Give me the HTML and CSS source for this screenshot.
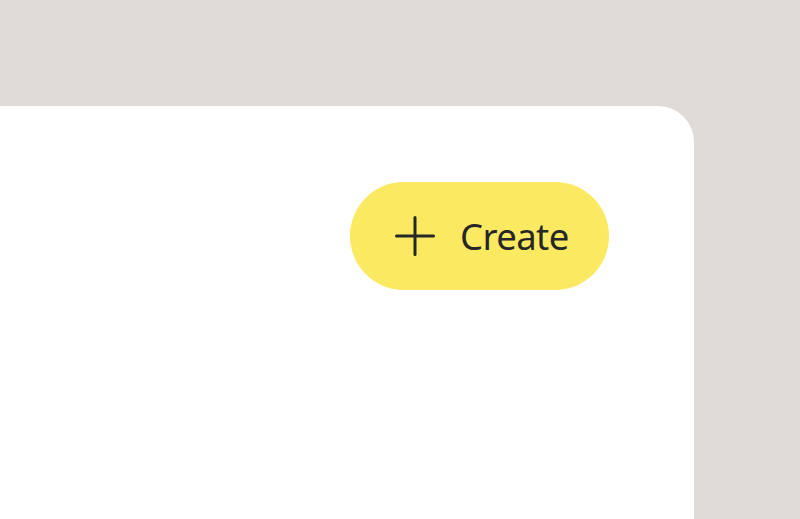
FILE: index.html
```html
<!DOCTYPE html>
<html>
<head>
<meta charset="utf-8">
<link rel="stylesheet" href="styles.css">
</head>
<body>
<div class="page">
  <main class="card">
    <div class="toolbar">
      <button class="create-btn">
        <svg class="plus" width="40" height="40" viewBox="0 0 40 40" aria-hidden="true">
          <path d="M20 1.5V38.5M1.5 20H38.5" stroke="#262626" stroke-width="3" stroke-linecap="round" fill="none"/>
        </svg>
        <span class="label">Create</span>
      </button>
    </div>
  </main>
</div>
</body>
</html>
```
FILE: styles.css
```css
html, body {
  margin: 0;
  padding: 0;
  height: 100%;
  overflow: hidden;
}
body {
  background: #e0dbd6;
  font-family: "Noto Sans", "Open Sans", sans-serif;
}
.page {
  padding-top: 106px;
  height: 100%;
  box-sizing: border-box;
}
.card {
  width: 694px;
  height: 100%;
  background: #ffffff;
  border-top-right-radius: 36px;
  box-sizing: border-box;
  padding: 76px 85px 0 0;
}
.toolbar {
  display: flex;
  justify-content: flex-end;
}
.create-btn {
  display: inline-flex;
  align-items: center;
  gap: 25px;
  width: 259px;
  height: 108px;
  padding: 0 0 0 45px;
  border: none;
  border-radius: 54px;
  background: #fce962;
  color: #262626;
  font-family: inherit;
  font-size: 36.5px;
  letter-spacing: -0.6px;
  font-weight: 400;
  cursor: pointer;
}
.plus {
  display: block;
  flex: none;
}
.label {
  line-height: 1;
  white-space: nowrap;
}
```
